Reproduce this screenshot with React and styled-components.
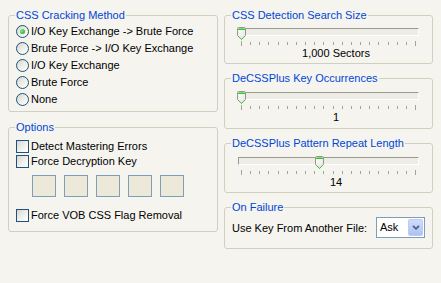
import React from "react";
import styled, { createGlobalStyle } from "styled-components";

const BG = "#f5f4ef";

const Global = createGlobalStyle`
  html, body { margin: 0; padding: 0; background: ${BG}; }
  body {
    font-family: "Liberation Sans", Arial, sans-serif;
    font-size: 11px;
    color: #000;
    width: 441px;
    height: 283px;
    overflow: hidden;
  }
`;

const Page = styled.div`
  display: grid;
  grid-template-columns: 210px 209px;
  column-gap: 6px;
  padding: 0 0 0 8px;
  align-items: start;
  height: 283px;
  box-sizing: border-box;
  background: ${BG};
`;

const Column = styled.div`
  display: flex;
  flex-direction: column;
`;

const GroupBox = styled.div`
  border: 1px solid #d0d0bf;
  border-radius: 3px;
  padding: 0 7px ${(p) => p.$pb}px;
  margin-top: ${(p) => p.$mt}px;
  display: flex;
  flex-direction: column;
`;

const Title = styled.div`
  width: fit-content;
  margin: -7px 0 0 -1px;
  padding: 0 1px;
  background: ${BG};
  color: #0046d5;
  line-height: 13px;
  height: 13px;
  white-space: nowrap;
`;

const RadioList = styled.div`
  margin-top: 1px;
  display: flex;
  flex-direction: column;
`;

const OptionRow = styled.label`
  display: flex;
  align-items: center;
  gap: 2px;
  height: ${(p) => p.$h || 17}px;
  margin-top: ${(p) => p.$mt || 0}px;
  white-space: nowrap;
  line-height: 13px;
`;

const RadioDot = styled.span`
  width: 13px;
  height: 13px;
  box-sizing: border-box;
  border-radius: 50%;
  border: 1px solid #1c5180;
  background: linear-gradient(135deg, #d4d4cc 0%, #ececE6 45%, #ffffff 100%);
  display: flex;
  align-items: center;
  justify-content: center;
  flex: none;
  &::after {
    content: "";
    width: 5px;
    height: 5px;
    border-radius: 50%;
    background: ${(p) =>
      p.$checked
        ? "radial-gradient(circle at 35% 35%, #8de88a 0%, #3ec13b 55%, #1f9c1c 100%)"
        : "transparent"};
  }
`;

const CheckBox = styled.span`
  width: 13px;
  height: 13px;
  box-sizing: border-box;
  border: 1px solid #1c5180;
  background: linear-gradient(135deg, #d6d6cf 0%, #efefea 50%, #ffffff 100%);
  flex: none;
`;

const KeyFields = styled.div`
  display: flex;
  gap: 8px;
  margin: 6px 0 0 16px;
`;

const KeyField = styled.span`
  width: 24px;
  height: 22px;
  box-sizing: border-box;
  border: 1px solid #7f9db9;
  background: #ece9d8;
`;

const SliderArea = styled.div`
  position: relative;
  margin: ${(p) => p.$top}px 6px 0;
  height: 13px;
`;

const Track = styled.div`
  margin-top: 1px;
  height: 8px;
  box-sizing: border-box;
  border-top: 1px solid #9a9a93;
  border-left: 1px solid #9a9a93;
  border-bottom: 1px solid #ffffff;
  border-right: 1px solid #ffffff;
  background: #eeede5;
`;

const Thumb = styled.svg`
  position: absolute;
  top: 0;
  display: block;
`;

const Ticks = styled.div`
  display: flex;
  justify-content: space-between;
  align-items: center;
  height: 5px;
  margin: 1px 9px 0;
`;

const Tick = styled.span`
  width: 1px;
  height: ${(p) => (p.$long ? 5 : 3)}px;
  background: #a3a398;
`;

const ValueLabel = styled.div`
  margin-top: 1px;
  padding-left: 15px;
  text-align: center;
  line-height: 13px;
  height: 13px;
  white-space: nowrap;
`;

const ComboRow = styled.div`
  display: flex;
  align-items: center;
  justify-content: space-between;
  margin-top: 3px;
  white-space: nowrap;
`;

const Combo = styled.div`
  width: 49px;
  height: 21px;
  box-sizing: border-box;
  border: 1px solid #7f9db9;
  background: #fff;
  display: flex;
  align-items: center;
  justify-content: space-between;
  padding: 0 1px 0 3px;
  line-height: 13px;
`;

const ComboButton = styled.span`
  width: 15px;
  height: 17px;
  box-sizing: border-box;
  border: 1px solid #bccdf5;
  border-radius: 2px;
  background: linear-gradient(180deg, #cfdcfb 0%, #bccdf7 60%, #adc1f1 100%);
  display: flex;
  align-items: center;
  justify-content: center;
`;

function ThumbIcon({ left }) {
  return (
    <Thumb width="9" height="13" viewBox="0 0 9 13" style={{ left }}>
      <defs>
        <linearGradient id={`tg${left}`} x1="0" y1="0" x2="1" y2="1">
          <stop offset="0" stopColor="#ffffff" />
          <stop offset="1" stopColor="#e4e3dc" />
        </linearGradient>
      </defs>
      <path
        d="M0.5 1.5 Q0.5 0.5 1.5 0.5 H7.5 Q8.5 0.5 8.5 1.5 V8.5 L4.5 12.5 L0.5 8.5 Z"
        fill={`url(#tg${left})`}
        stroke="#8f9a8a"
      />
      <path d="M1.5 1.5 H7.5" stroke="#7ddc79" />
      <path d="M1 2.5 H8" stroke="#3fbf3b" />
      <path d="M1.2 9.2 L4.5 12.3 L7.8 9.2" stroke="#45c241" fill="none" />
    </Thumb>
  );
}

function SliderBox({ title, value, thumbLeft, mt, pb, top }) {
  return (
    <GroupBox $mt={mt} $pb={pb}>
      <Title>{title}</Title>
      <SliderArea $top={top}>
        <Track />
        <ThumbIcon left={thumbLeft} />
      </SliderArea>
      <Ticks>
        {Array.from({ length: 20 }, (_, i) => (
          <Tick key={i} $long={i === 0 || i === 19} />
        ))}
      </Ticks>
      <ValueLabel>{value}</ValueLabel>
    </GroupBox>
  );
}

const methods = [
  "I/O Key Exchange -> Brute Force",
  "Brute Force -> I/O Key Exchange",
  "I/O Key Exchange",
  "Brute Force",
  "None",
];

export default function App() {
  return (
    <>
      <Global />
      <Page>
        <Column>
          <GroupBox $mt={15} $pb={3}>
            <Title>CSS Cracking Method</Title>
            <RadioList>
              {methods.map((m, i) => (
                <OptionRow key={m}>
                  <RadioDot $checked={i === 0} />
                  {m}
                </OptionRow>
              ))}
            </RadioList>
          </GroupBox>
          <GroupBox $mt={15} $pb={8}>
            <Title>Options</Title>
            <OptionRow $h={15} $mt={5}>
              <CheckBox />
              Detect Mastering Errors
            </OptionRow>
            <OptionRow $h={15}>
              <CheckBox />
              Force Decryption Key
            </OptionRow>
            <KeyFields>
              {[0, 1, 2, 3, 4].map((k) => (
                <KeyField key={k} />
              ))}
            </KeyFields>
            <OptionRow $h={15} $mt={11}>
              <CheckBox />
              Force VOB CSS Flag Removal
            </OptionRow>
          </GroupBox>
        </Column>
        <Column>
          <SliderBox
            title="CSS Detection Search Size"
            value="1,000 Sectors"
            thumbLeft={-1}
            mt={15}
            pb={3}
            top={5}
          />
          <SliderBox
            title="DeCSSPlus Key Occurrences"
            value="1"
            thumbLeft={-1}
            mt={14}
            pb={4}
            top={6}
          />
          <SliderBox
            title="DeCSSPlus Pattern Repeat Length"
            value="14"
            thumbLeft={77}
            mt={14}
            pb={3}
            top={6}
          />
          <GroupBox $mt={14} $pb={10}>
            <Title>On Failure</Title>
            <ComboRow>
              <span>Use Key From Another File:</span>
              <Combo>
                <span>Ask</span>
                <ComboButton>
                  <svg width="8" height="5" viewBox="0 0 8 5">
                    <path
                      d="M1 0.8 L4 3.8 L7 0.8"
                      stroke="#4d6185"
                      strokeWidth="1.8"
                      fill="none"
                    />
                  </svg>
                </ComboButton>
              </Combo>
            </ComboRow>
          </GroupBox>
        </Column>
      </Page>
    </>
  );
}
